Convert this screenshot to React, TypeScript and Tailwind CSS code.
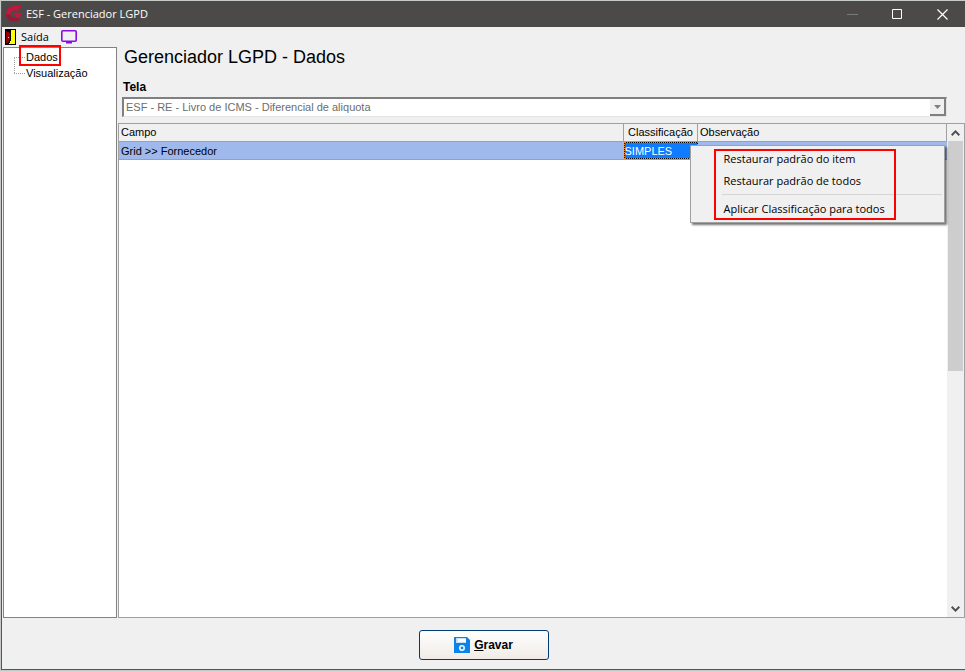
const treeItems = ["Dados", "Visualização"]

function LogoIcon() {
  return (
    <svg width="18" height="18" viewBox="0 0 18 18" aria-hidden="true">
      <path d="M16.500 1 14 5.500H9.500C7 5.500 5.500 7 5.500 9.200c0 2.100 1.300 3.600 3.400 3.600h2l1-2.300H8.500L10 7.700h6.500L14 16.500H8.500C4 16.500 1 13.500 1 9.300 1 4.500 4.500 1 9.500 1z" fill="#c2183f" />
      <path d="M1 9.300c0 4.200 3 7.200 7.500 7.200H14l1.100-3.700H8.900c-2.100 0-3.400-1.500-3.400-3.500z" fill="#921c38" />
    </svg>
  )
}

function DoorIcon() {
  return (
    <svg width="12" height="16" viewBox="0 0 12 16" shapeRendering="crispEdges" aria-hidden="true">
      <path d="M0 0h11v16H0z" fill="#000" />
      <path d="M1 1h9v14H1z" fill="#ffff00" />
      <path d="M1 1h5v11H5v2H4v1H1z" fill="#000" />
      <path d="M1 2h1v1h2v1h1v7H4v2H3v1H1z" fill="#900000" />
      <path d="M3 8h1v1H3z" fill="#ffff00" />
    </svg>
  )
}

function MonitorIcon() {
  return (
    <svg width="16" height="14" viewBox="0 0 16 14" fill="none" aria-hidden="true">
      <rect x="0.800" y="0.800" width="14.400" height="10.400" rx="1" stroke="#8a0be8" strokeWidth="1.600" />
      <path d="M5 12.500h6" stroke="#8a0be8" strokeWidth="2" />
    </svg>
  )
}

function SaveIcon() {
  return (
    <svg width="16" height="16" viewBox="0 0 16 16" aria-hidden="true">
      <path d="M0 0h13l3 3v13H0z" fill="#0a84e8" />
      <rect x="2" y="1" width="10" height="5" fill="#c4e0f8" />
      <rect x="4" y="2" width="8" height="3" fill="#fff" />
      <circle cx="8" cy="11" r="2.200" fill="#0a84e8" stroke="#fff" strokeWidth="1.500" />
    </svg>
  )
}

function ScrollArrow({ d }: { d: string }) {
  return (
    <svg width="9" height="6" viewBox="0 0 9 6" fill="none" stroke="#505050" strokeWidth="2" aria-hidden="true">
      <path d={d} />
    </svg>
  )
}

function TitleBar() {
  return (
    <header className="flex h-[26px] items-center bg-[#4b4a48] pl-[3px] text-white">
      <LogoIcon />
      <h1 className="ml-[3px] flex-1 font-['Open_Sans',sans-serif] text-[11px]">ESF - Gerenciador LGPD</h1>
      <button aria-label="Minimizar" disabled className="flex h-full w-[45px] items-center justify-center">
        <svg width="11" height="11" stroke="#7a7a78"><path d="M0 5.500h11" /></svg>
      </button>
      <button aria-label="Maximizar" className="flex h-full w-[45px] items-center justify-center">
        <svg width="11" height="11" fill="none" stroke="#fff"><path d="M.5.5h9v9H.5z" /></svg>
      </button>
      <button aria-label="Fechar" className="flex h-full w-[45px] items-center justify-center">
        <svg width="11" height="11" stroke="#fff" strokeWidth="1.200"><path d="m.5.5 10 10m0-10-10 10" /></svg>
      </button>
    </header>
  )
}

function ContextMenu() {
  const item = "block h-[22px] w-full pl-[33px] text-left leading-[22px]"
  return (
    <div className="absolute top-[3px] left-[66px] z-10 w-[255px] border border-[#a0a0a0] bg-[#f0f0f0] py-0.5 font-['Open_Sans',sans-serif] text-[11px] whitespace-nowrap text-black shadow-[2px_2px_2px_rgba(0,0,0,0.55)]">
      <button className={item}>Restaurar padrão do item</button>
      <button className={item}>Restaurar padrão de todos</button>
      <hr className="mt-0.5 mr-0.5 mb-[3px] ml-[31px] border-[#d5d5d5]" />
      <button className={item}>Aplicar Classificação para todos</button>
      <div className="pointer-events-none absolute top-[3px] left-[23px] h-[71px] w-[182px] border-2 border-[#ff0000]" />
    </div>
  )
}

export default function App() {
  return (
    <div className="flex min-h-screen flex-col bg-[#c6cac6] pt-px pb-px pl-px font-['Liberation_Sans',sans-serif] text-[11px] text-black">
      <div className="flex flex-1 flex-col border-b border-l border-[#555] bg-[#f0f0f0]">
        <TitleBar />

        <nav className="flex h-5 items-center pl-[3px]">
          <button className="flex items-center gap-1 font-['Open_Sans',sans-serif]">
            <DoorIcon />
            Saída
          </button>
          <button aria-label="Monitor" className="ml-3">
            <MonitorIcon />
          </button>
        </nav>

        <div className="flex flex-1 gap-px pl-px">
          <aside className="w-[114px] shrink-0 border border-[#828282] bg-white pt-px">
            <ul className="relative ml-2.5">
              <li className="absolute top-2 left-0 h-4 border-l border-dotted border-[#a0a0a0]" />
              {treeItems.map((label) => (
                <li key={label} className="flex h-4 items-center">
                  <span className="w-[11px] border-t border-dotted border-[#a0a0a0]" />
                  <a href="#" className="pl-px leading-4">{label}</a>
                </li>
              ))}
              <li className="pointer-events-none absolute -top-1 left-[5px] h-[21px] w-[42px] border-2 border-[#ff0000]" />
            </ul>
          </aside>

          <main className="flex min-w-0 flex-1 flex-col">
            <h2 className="pl-1.5 text-[18px] leading-5">Gerenciador LGPD - Dados</h2>
            <label htmlFor="tela" className="mt-3 pl-[5px] text-[12px] leading-4 font-bold">Tela</label>
            <div className="relative mt-0.5 mr-[18px] ml-1 h-5 border-t-2 border-l-2 border-r border-b border-[#808080] border-r-[#e3e3e3] border-b-[#e3e3e3] bg-white">
              <select id="tela" disabled className="block h-full w-full appearance-none pl-0.5 text-[#6d6d6d] opacity-100">
                <option>ESF - RE - Livro de ICMS - Diferencial de aliquota</option>
              </select>
              <span className="pointer-events-none absolute top-0 right-0 flex h-full w-4 items-center justify-center border-r-2 border-b-2 border-[#808080] bg-[#f0f0f0]">
                <svg width="7" height="4" fill="#808080"><path d="M0 0h7L3.500 4z" /></svg>
              </span>
            </div>

            <div className="mt-1.5 flex flex-1 border border-[#a0a0a0] bg-white">
              <div className="min-w-0 flex-1">
                <table className="w-full table-fixed border-collapse text-left">
                  <thead>
                    <tr className="h-[17px] border-b border-[#a0a0a0] bg-[#f0f0f0] leading-4">
                      <th className="border-r border-[#a0a0a0] p-0 pl-0.5 font-normal">Campo</th>
                      <th className="w-[74px] border-r border-[#a0a0a0] p-0 text-center font-normal">Classificação</th>
                      <th className="w-[249px] border-r border-[#a0a0a0] p-0 pl-0.5 font-normal">Observação</th>
                    </tr>
                  </thead>
                  <tbody>
                    <tr className="h-[18px] border-b border-[#a0a0a0] bg-[#9fb9ec]">
                      <td className="p-0 pt-px pl-0.5 leading-4">Grid &gt;&gt; Fornecedor</td>
                      <td className="relative bg-black p-0">
                        <div className="h-[17px] border border-dotted border-[#f08a1e] bg-[#0f7bff] bg-clip-padding leading-4 text-white">SIMPLES</div>
                        <ContextMenu />
                      </td>
                      <td className="p-0" />
                    </tr>
                  </tbody>
                </table>
              </div>
              <div className="flex w-[17px] shrink-0 flex-col items-center bg-[#f0f0f0]">
                <div className="flex h-[17px] items-center">
                  <ScrollArrow d="M.7 5.200 4.500 1.400l3.800 3.800" />
                </div>
                <div className="h-[230px] w-[15px] bg-[#cdcdcd]" />
                <div className="mt-auto flex h-[17px] items-center">
                  <ScrollArrow d="M.7.8l3.800 3.800L8.300.8" />
                </div>
              </div>
            </div>
          </main>
        </div>

        <footer className="flex justify-center pt-3 pb-[9px]">
          <button className="flex h-[30px] w-[130px] items-center justify-center gap-1 rounded-[3px] border border-[#003c74] bg-linear-to-b from-white to-[#f0ebe6] text-[12px] font-bold">
            <SaveIcon />
            <span><u>G</u>ravar</span>
          </button>
        </footer>
      </div>
    </div>
  )
}
